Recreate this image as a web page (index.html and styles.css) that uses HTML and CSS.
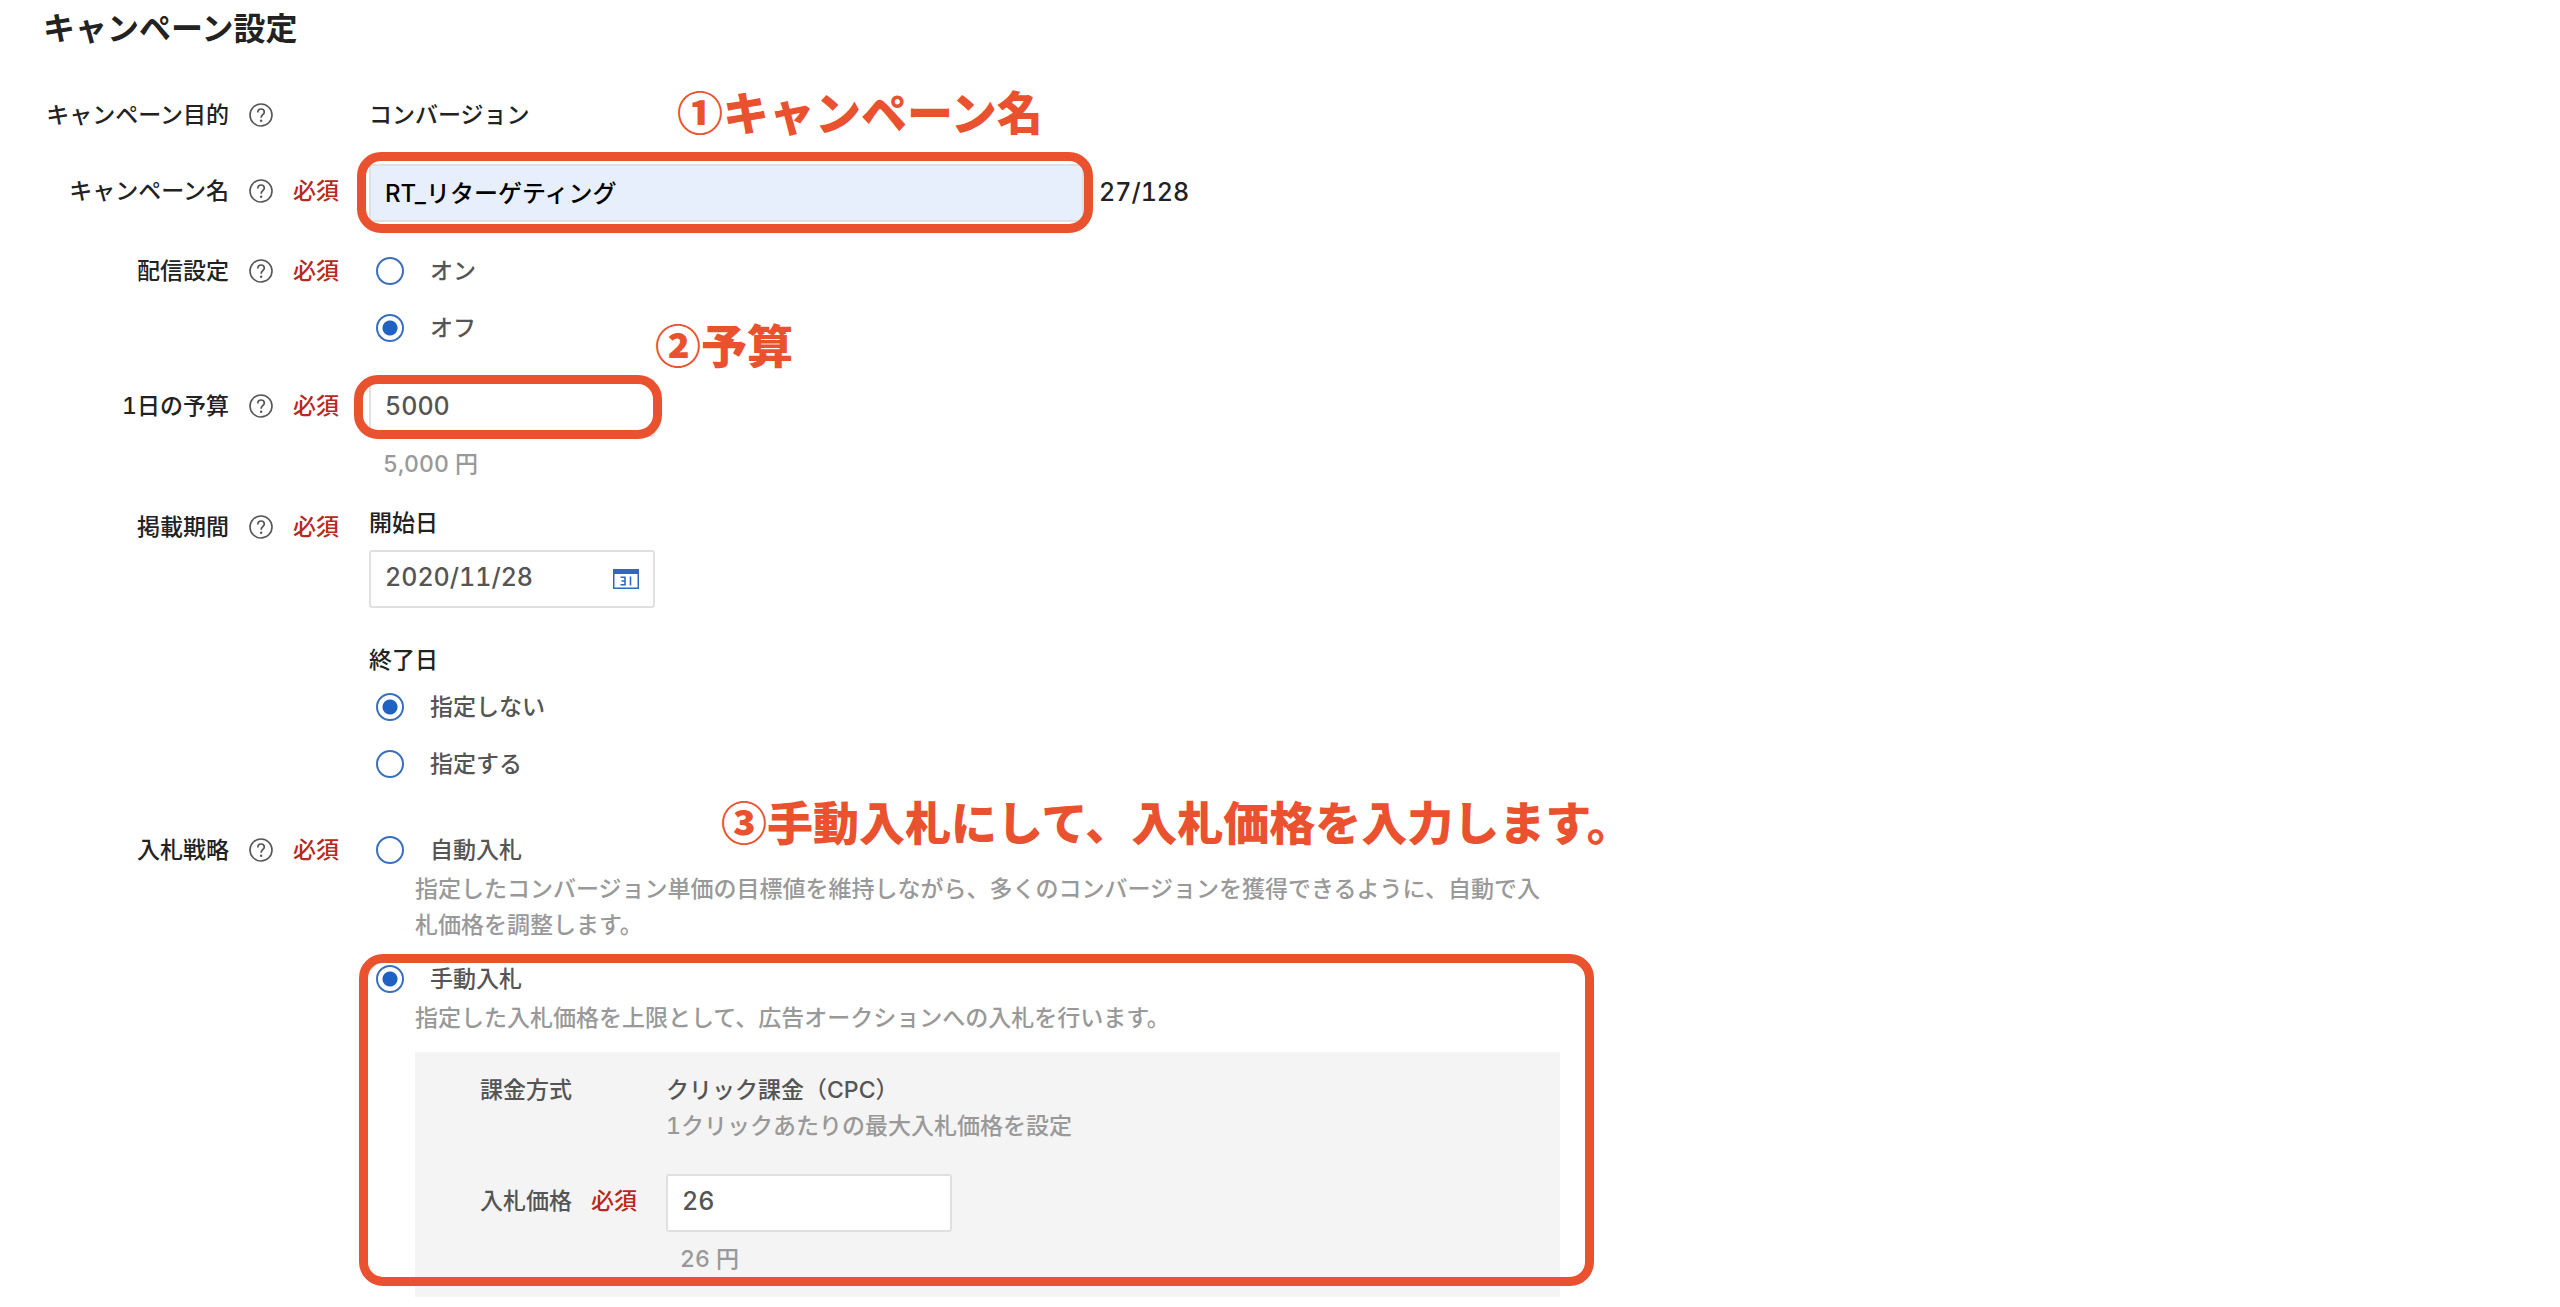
FILE: index.html
```html
<!DOCTYPE html>
<html lang="ja">
<head>
<meta charset="utf-8">
<meta name="viewport" content="width=device-width, initial-scale=1">
<title>キャンペーン設定</title>
<link rel="stylesheet" href="styles.css">
</head>
<body>
<svg class="sprite" aria-hidden="true">
  <symbol id="icon-help" viewBox="0 0 24 24">
    <circle cx="12" cy="12" r="11" fill="none" stroke="currentColor" stroke-width="1.6"/>
    <path d="M8.8 9.400C8.800 7.300 10.200 6 12.100 6s3.200 1.200 3.200 3c0 2.600-3.200 2.900-3.200 5.700" fill="none" stroke="currentColor" stroke-width="1.700"/>
    <circle cx="12.100" cy="17.700" r="1.200" fill="currentColor"/>
  </symbol>
</svg>
<form class="settings">
  <h1 class="title">キャンペーン設定</h1>

  <div class="row row-first">
    <span class="label">キャンペーン目的</span>
    <button class="help" type="button" aria-label="ヘルプ"><svg><use href="#icon-help"/></svg></button>
    <div class="value">
      <p class="text">コンバージョン</p>
    </div>
  </div>

  <div class="row row-input">
    <label class="label" for="name">キャンペーン名</label>
    <button class="help" type="button" aria-label="ヘルプ"><svg><use href="#icon-help"/></svg></button>
    <span class="required">必須</span>
    <div class="value counted">
      <div class="field field-wide">
        <input class="input input-filled" id="name" type="text" value="RT_リターゲティング">
        <span class="ring ring-name"></span>
        <strong class="note note-name">①キャンペーン名</strong>
      </div>
      <span class="count">27/128</span>
    </div>
  </div>

  <div class="row">
    <span class="label">配信設定</span>
    <button class="help" type="button" aria-label="ヘルプ"><svg><use href="#icon-help"/></svg></button>
    <span class="required">必須</span>
    <div class="value radios">
      <label class="radio"><input type="radio" name="delivery">オン</label>
      <label class="radio"><input type="radio" name="delivery" checked>オフ</label>
    </div>
  </div>

  <div class="row row-input row-budget">
    <label class="label" for="budget">1日の予算</label>
    <button class="help" type="button" aria-label="ヘルプ"><svg><use href="#icon-help"/></svg></button>
    <span class="required">必須</span>
    <div class="value">
      <div class="field">
        <input class="input" id="budget" type="text" value="5000">
        <span class="ring ring-budget"></span>
        <strong class="note note-budget">②予算</strong>
      </div>
      <p class="hint">5,000 円</p>
    </div>
  </div>

  <div class="row row-period">
    <span class="label">掲載期間</span>
    <button class="help" type="button" aria-label="ヘルプ"><svg><use href="#icon-help"/></svg></button>
    <span class="required">必須</span>
    <div class="value">
      <label class="subhead" for="start">開始日</label>
      <div class="field field-date">
        <input class="input" id="start" type="text" value="2020/11/28">
        <button class="calendar" type="button" aria-label="カレンダー">
          <svg viewBox="0 0 26 20">
            <path d="M0 0h26v20H0z" fill="#2f69bf"/>
            <path d="M1.500 5h23v13.500h-23z" fill="#fff"/>
            <path d="M7.500 8.300h4.500v7.400H7.500M8.500 12h3.500M17.500 7.500V16.500" fill="none" stroke="#2f69bf" stroke-width="1.600"/>
          </svg>
        </button>
      </div>
      <p class="subhead subhead-end">終了日</p>
      <div class="radios">
        <label class="radio"><input type="radio" name="end" checked>指定しない</label>
        <label class="radio"><input type="radio" name="end">指定する</label>
      </div>
    </div>
  </div>

  <div class="row row-strategy">
    <span class="label">入札戦略</span>
    <button class="help" type="button" aria-label="ヘルプ"><svg><use href="#icon-help"/></svg></button>
    <span class="required">必須</span>
    <div class="value strategies">
      <div class="strategy">
        <label class="radio"><input type="radio" name="strategy">自動入札</label>
        <p class="description">指定したコンバージョン単価の目標値を維持しながら、多くのコンバージョンを獲得できるように、自動で入札価格を調整します。</p>
        <strong class="note note-strategy">③手動入札にして、入札価格を入力します。</strong>
      </div>
      <div class="strategy">
        <label class="radio"><input type="radio" name="strategy" checked>手動入札</label>
        <p class="description">指定した入札価格を上限として、広告オークションへの入札を行います。</p>
        <div class="panel">
          <div class="panel-row">
            <span>課金方式</span>
            <div>
              <p>クリック課金（CPC）</p>
              <p class="muted">1クリックあたりの最大入札価格を設定</p>
            </div>
          </div>
          <div class="panel-row">
            <div class="panel-head">
              <label for="bid">入札価格</label>
              <span class="required">必須</span>
            </div>
            <div>
              <div class="field"><input class="input" id="bid" type="text" value="26"></div>
              <p class="hint">26 円</p>
            </div>
          </div>
        </div>
        <span class="ring ring-strategy"></span>
      </div>
    </div>
  </div>
</form>
</body>
</html>
```

FILE: styles.css
```css
* {
  box-sizing: border-box;
}

body {
  margin: 0;
  background: #fff;
  color: #222;
  font: 500 23px/36px Inter, "Noto Sans CJK JP", sans-serif;
  font-variant-numeric: tabular-nums;
}

p {
  margin: 0;
}

.sprite {
  display: none;
}

.settings {
  padding: 11px 0 10px;
}

.title {
  margin: 0 0 50px 43px;
  font-size: 32px;
  line-height: 36px;
  font-weight: 700;
}

/* Form rows: label, help, required mark, value */
.row {
  display: grid;
  grid-template-columns: 229px 24px 46px minmax(0, 1fr);
  column-gap: 20px;
  align-items: start;
  margin-top: 31px;
}

.row-first {
  margin-top: 0;
}

.row-budget {
  margin-top: 33px;
}

.row-period {
  margin-top: 23px;
}

.row-strategy {
  margin-top: 50px;
}

.row-input > .label,
.row-input > .help,
.row-input > .required {
  margin-top: 9px;
}

.row-period > .label,
.row-period > .help,
.row-period > .required {
  margin-top: 4px;
}

.label {
  text-align: right;
  white-space: nowrap;
}

.help {
  display: flex;
  align-items: center;
  height: 36px;
  padding: 0;
  border: 0;
  background: none;
  color: #555;
}

.help svg {
  width: 24px;
  height: 24px;
}

.required {
  color: #b8281e;
  white-space: nowrap;
}

.value {
  grid-column: 4;
  padding-left: 10px;
}

/* Text fields */
.field {
  position: relative;
  width: 286px;
}

.field-wide {
  width: 715px;
}

.input {
  display: block;
  width: 100%;
  height: 58px;
  padding: 0 14px 4px;
  border: 2px solid #e0e0e0;
  border-radius: 3px;
  background: #fff;
  color: #555;
  font: 500 25px/36px Inter, "Noto Sans CJK JP", sans-serif;
  font-variant-numeric: tabular-nums;
}

.input-filled {
  background: #e8effc;
  color: #000;
  font-size: 24px;
}

.counted {
  display: flex;
  align-items: center;
  gap: 15px;
}

.count {
  padding-bottom: 2px;
  font-size: 25px;
}

.hint {
  margin-top: 9px;
  padding-left: 14px;
  color: #999;
}

.subhead {
  display: block;
  margin-bottom: 9px;
}

.subhead-end {
  margin-top: 34px;
  margin-bottom: 11px;
}

.field-date {
  display: flex;
  align-items: center;
}

.calendar {
  position: absolute;
  right: 16px;
  display: flex;
  padding: 0;
  border: 0;
  background: none;
}

.calendar svg {
  width: 26px;
  height: 20px;
}

/* Radio buttons */
.radios {
  display: grid;
  gap: 21px;
}

.radio {
  display: flex;
  align-items: center;
  gap: 26px;
  padding-left: 7px;
  color: #555;
}

.radio input {
  appearance: none;
  flex: none;
  width: 28px;
  height: 28px;
  margin: 0;
  border: 2px solid #3a6fc0;
  border-radius: 50%;
  background: #fff;
}

.radio input:checked {
  background: radial-gradient(circle, #1f62c4 7px, #fff 8px);
}

/* Bidding strategies */
.strategies {
  display: grid;
  gap: 18px;
  max-width: 1201px;
}

.strategy {
  position: relative;
}

.description {
  margin: 3px 0 0 46px;
  color: #999;
}

.panel {
  display: grid;
  gap: 30px;
  margin: 16px 0 0 46px;
  padding: 20px 0 20px 65px;
  background: #f4f4f4;
  color: #555;
}

.panel-row {
  display: grid;
  grid-template-columns: 186px minmax(0, 1fr);
}

.panel-head {
  display: flex;
  gap: 19px;
  padding-top: 9px;
}

.muted {
  color: #999;
}

/* Callouts drawn over the form */
.ring {
  position: absolute;
  border: 9px solid #ea512e;
  border-radius: 24px;
  pointer-events: none;
}

.ring-name {
  inset: -12px -9px -11px -12px;
}

.ring-budget {
  inset: -4px -7px -2px -15px;
}

.ring-strategy {
  inset: -7px -34px 11px -10px;
}

.note {
  position: absolute;
  color: #ea512e;
  font: 900 46px/48px "Noto Sans CJK JP", sans-serif;
  white-space: nowrap;
  pointer-events: none;
}

.note-name {
  top: -78px;
  left: 308px;
}

.note-budget {
  top: -60px;
  left: 286px;
}

.note-strategy {
  top: -36px;
  left: 352px;
}
```
